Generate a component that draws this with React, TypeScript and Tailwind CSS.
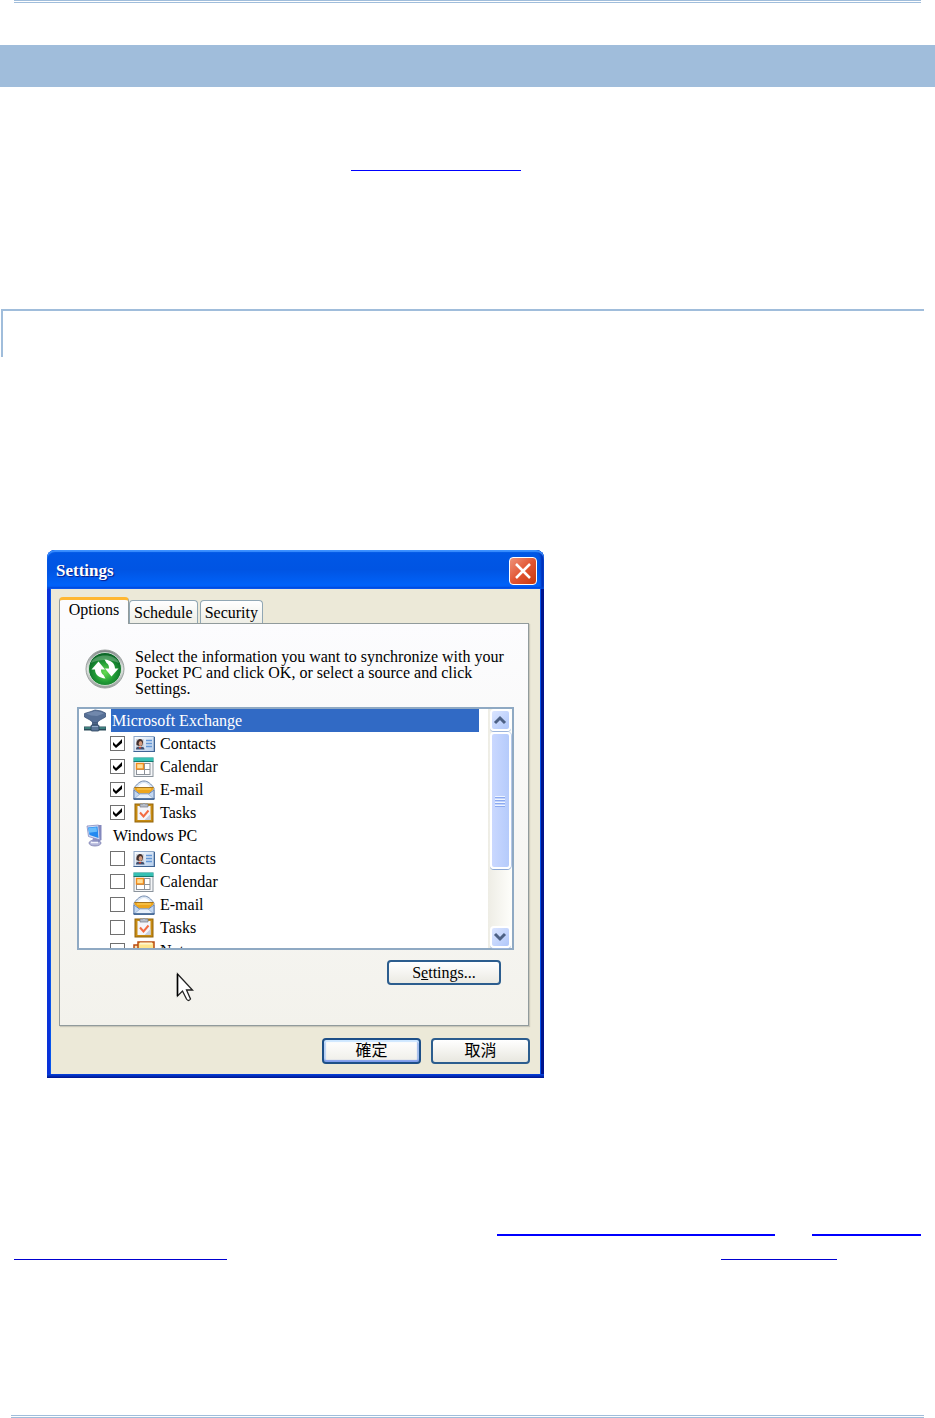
import React from "react";

function ContactsIcon() {
    return (
        <svg viewBox="0 0 22 20" className="h-5 w-[22px]" aria-hidden="true">
            <defs>
                <linearGradient id="card" x1="0" y1="0" x2="1" y2="1">
                    <stop offset="0" stopColor="#ffffff" />
                    <stop offset="1" stopColor="#b4cdec" />
                </linearGradient>
            </defs>
            <rect x="1" y="2.5" width="20" height="15" fill="url(#card)" stroke="#8fa8c8" />
            <path d="M0.5 17.5h21V3" fill="none" stroke="#3f6494" strokeWidth="1.2" />
            <rect x="3" y="5" width="8" height="10" fill="#cfd4dc" />
            <path d="M3.500 11c-1-7 7-8 6.500-2l-1 3h-3z" fill="#43302e" />
            <ellipse cx="7.500" cy="9.500" rx="1.800" ry="2.500" fill="#d39a7c" />
            <path d="M3 15.500c0-3 2-3 4-2.500 2-.5 4.500 0 4.500 2.500z" fill="#3d4f70" />
            <path d="M5.500 13l1.500 2 1.500-2z" fill="#d8442c" />
            <path d="M13 6.500h6M13 9.500h6M13 12.500h6" stroke="#6497d6" strokeWidth="1.300" />
        </svg>
    );
}

function CalendarIcon() {
    return (
        <svg viewBox="0 0 22 20" className="h-5 w-[22px]" aria-hidden="true">
            <rect x="1" y="1" width="19" height="18.500" fill="#f4f6f8" stroke="#8a939c" />
            <rect x="0.500" y="0.500" width="20" height="3.500" fill="#36c0b3" />
            <path d="M0.500 4.500h20" stroke="#16796f" />
            <rect x="3.500" y="6.500" width="13.500" height="11" fill="#fff" stroke="#8c9299" />
            <path d="M11.500 6.500v11M3.500 12.500H17" stroke="#8c9299" />
            <rect x="3.500" y="6.500" width="7" height="5.500" fill="#ffe09b" stroke="#f08a1c" strokeWidth="1.400" />
        </svg>
    );
}

function MailIcon() {
    return (
        <svg viewBox="0 0 22 20" className="h-5 w-[22px]" aria-hidden="true">
            <path d="M1 8C4 4 7 1 11 1s7 3 10 7v11H1z" fill="#dbe7f5" stroke="#7189ad" />
            <path d="M5 7C7 4 9 3 11 3s4 1 6 4z" fill="#fff" />
            <path d="M1.500 7h19v2.500L16 13.500H6L1.500 9.500z" fill="#eda51d" />
            <path d="M1.500 7.500h19" stroke="#a8751d" />
            <path d="M4 9h14" stroke="#ffd667" />
            <path d="M1 19V10l5.500 4h9l5.500-4v9z" fill="#c3d8f2" stroke="#6a87b4" />
            <path d="M1 19l6-5h8l6 5z" fill="#e6effa" stroke="#8ca7cc" strokeWidth=".7" />
            <path d="M0.500 19h21" stroke="#345a8b" strokeWidth="1.500" />
        </svg>
    );
}

function TasksIcon() {
    return (
        <svg viewBox="0 0 22 20" className="h-5 w-[22px]" aria-hidden="true">
            <rect x="2" y="1" width="18" height="18" fill="#c88c12" stroke="#94640b" />
            <path d="M4.500 3h13v14h-13z" fill="#f5f5fa" />
            <path d="M17.500 11v6h-6z" fill="#c8cfe0" />
            <path d="M7 1h2.500q1.500-2 3 0H15v3H7z" fill="#b8bec9" stroke="#727985" strokeWidth=".7" />
            <path d="M7 9.500l3.500 4 5-6" fill="none" stroke="#f36b42" strokeWidth="2" />
        </svg>
    );
}

function NotesIcon() {
    return (
        <svg viewBox="0 0 22 20" className="h-5 w-[22px]" aria-hidden="true">
            <path d="M1 4h5v15H1z" fill="#f8dfaf" stroke="#b9490e" strokeWidth="1.500" />
            <path d="M5 1h16v17H5z" fill="#ffe58d" stroke="#b9490e" strokeWidth="1.500" />
            <path d="M7 2.500h12" stroke="#fff7cf" strokeWidth="2" />
        </svg>
    );
}

function ExchangeIcon() {
    return (
        <svg viewBox="0 0 24 23" className="h-[23px] w-6 shrink-0" aria-hidden="true">
            <path d="M1 19.500h22" stroke="#2b4a58" strokeWidth="4" />
            <path d="M1.500 19h21" stroke="#46928a" strokeWidth="1.500" />
            <path d="M9 9h6v8H9z" fill="#4f6587" />
            <path d="M1.500 4.500L8 2.500l4-1.500 6 1 4.500 2v4L17 11l-3 2.500h-4L7 11 1.500 8z" fill="#566f95" stroke="#40577b" strokeWidth=".8" />
            <path d="M3 4.500l6-1.500 3-1 6 1 3 1.500-7 2.500-6-.5z" fill="#7188ac" />
            <rect x="8" y="16" width="8" height="6" rx="1" fill="#5b7597" stroke="#27405c" strokeWidth=".8" />
            <path d="M9 17.500h6" stroke="#93aaca" />
        </svg>
    );
}

function ComputerIcon() {
    return (
        <svg viewBox="0 0 24 23" className="h-[23px] w-6 shrink-0" aria-hidden="true">
            <ellipse cx="12" cy="19" rx="6" ry="3" fill="#b4b7da" stroke="#7a7db0" strokeWidth=".8" />
            <path d="M10 14h6l1 4H9z" fill="#8d91c1" />
            <path d="M15 1h3.500v15L15 18z" fill="#8388bd" />
            <path d="M4 2L15.500 1l1.500 15L5.500 12.500z" fill="#d6def4" stroke="#858bc0" strokeWidth=".8" />
            <path d="M5 3.500L14.500 2.500l1 11.500L6.500 11z" fill="#2389f0" />
            <path d="M5.500 4l8-.8.5 4.500-8 1z" fill="#68bdfc" />
            <path d="M8 18.500h7" stroke="#f3f4fc" strokeWidth="1.500" />
        </svg>
    );
}

function SyncIcon() {
    return (
        <svg viewBox="0 0 40 40" className="h-10 w-10 shrink-0" aria-hidden="true">
            <defs>
                <linearGradient id="ring" x1="0" y1="0" x2="0" y2="1">
                    <stop offset="0" stopColor="#7d8384" />
                    <stop offset=".5" stopColor="#e2e5e4" />
                    <stop offset="1" stopColor="#979d9b" />
                </linearGradient>
                <radialGradient id="orb" cx=".5" cy=".6" r=".6">
                    <stop offset="0" stopColor="#66dc52" />
                    <stop offset=".5" stopColor="#209b35" />
                    <stop offset="1" stopColor="#075e25" />
                </radialGradient>
            </defs>
            <circle cx="20" cy="20" r="19" fill="url(#ring)" stroke="#9aa09e" />
            <circle cx="20" cy="20" r="16.500" fill="url(#orb)" stroke="#e7efe7" strokeWidth=".8" />
            <path d="M6 14C9 4 31 4 34 14 25 10 14 10 6 14z" fill="#fff" opacity=".25" />
            <path d="M13.500 12.500L6.500 20.500h3.500c0 5 4 8.500 10.500 9l-2-3.500c-2-1-2.500-3-2.500-5.500h4z" fill="#fff" />
            <path d="M26.500 27.500l7-8H30c0-5-4-8.500-10.500-9l2 3.500c2 1 2.500 3 2.500 5.500h-4z" fill="#fff" />
        </svg>
    );
}

const items = [
    { name: "Contacts", Icon: ContactsIcon },
    { name: "Calendar", Icon: CalendarIcon },
    { name: "E-mail", Icon: MailIcon },
    { name: "Tasks", Icon: TasksIcon },
];

function SourceItem({ name, Icon, checked }: { name: string; Icon: () => React.ReactNode; checked?: boolean }) {
    return (
        <label className="flex h-[23px] items-center pl-[31px]">
            <span className="grid h-[15px] w-[15px]">
                <input
                    type="checkbox"
                    defaultChecked={checked}
                    className="peer col-start-1 row-start-1 h-[15px] w-[15px] appearance-none border border-[#707070] bg-white"
                />
                <svg
                    viewBox="0 0 15 15"
                    className="pointer-events-none invisible col-start-1 row-start-1 h-[15px] w-[15px] peer-checked:visible"
                    aria-hidden="true"
                >
                    <path d="M3 6l3 3 6-6v4l-6 5-3-3z" fill="#000" />
                </svg>
            </span>
            <span className="ml-2 flex shrink-0">
                <Icon />
            </span>
            <span className="ml-[5px]">{name}</span>
        </label>
    );
}

function ScrollButton({ label, d }: { label: string; d: string }) {
    return (
        <button
            type="button"
            aria-label={label}
            className="flex h-[22px] w-[21px] shrink-0 items-center justify-center rounded-sm border-2 border-white bg-linear-to-br from-[#dbe5ff] to-[#b0c7fa] shadow-[0_1px_0_#9cb5dc]"
        >
            <svg viewBox="0 0 14 12" className="h-3 w-3.5">
                <path d={d} fill="none" stroke="#4d6185" strokeWidth="3" />
            </svg>
        </button>
    );
}

function SettingsDialog() {
    const [tab, setTab] = React.useState("Options");

    return (
        <section
            aria-label="Settings"
            className="w-full max-w-[497px] rounded-t-lg bg-linear-to-r from-[#0831d9] via-[#0855ec] to-[#00138c] font-['Liberation_Serif','Noto_Sans_CJK_TC',serif] text-base leading-4 text-black"
        >
            <header className="flex h-[39px] items-center justify-between rounded-t-lg bg-linear-to-b from-[#0058e6] via-[#0054e3] to-[#0066ff] pt-0.5 pr-[7px] pl-[9px] shadow-[inset_0_2px_1px_#3b91ff,inset_0_-2px_2px_#0046d5,inset_-3px_0_2px_#0030b8]">
                <h2 className="text-[17px] font-bold text-white [text-shadow:1px_1px_1px_#0a1883]">Settings</h2>
                <button
                    type="button"
                    aria-label="Close"
                    className="flex h-7 w-7 items-center justify-center rounded-sm border border-white bg-linear-to-br from-[#ed9279] via-[#e25532] to-[#c83808]"
                >
                    <svg viewBox="0 0 18 18" className="h-[18px] w-[18px]">
                        <path d="M2 2l14 14M16 2L2 16" stroke="#fff" strokeWidth="2.500" />
                    </svg>
                </button>
            </header>

            <div className="mx-1 bg-[#ece9d8] px-2 pt-2 pb-2.5 shadow-[0_0_0_1px_#0855ec]">
                <div role="tablist" className="flex h-[26px] items-end">
                    {["Options", "Schedule", "Security"].map((name) => (
                        <button
                            key={name}
                            type="button"
                            role="tab"
                            aria-selected={tab === name}
                            onClick={() => setTab(name)}
                            className={
                                tab === name
                                    ? "z-10 -mb-px h-[27px] w-[70px] rounded-t-sm border-x border-t-3 border-x-[#919b9c] border-t-[#ffb732] bg-[#fcfcfe] pb-1"
                                    : "mr-0.5 h-[23px] rounded-t-sm border border-b-0 border-[#91a7b4] bg-linear-to-b from-white to-[#eeeee6] px-1 pt-0.5"
                            }
                        >
                            {name}
                        </button>
                    ))}
                </div>

                <div
                    role="tabpanel"
                    className="mr-[3px] h-[403px] border border-[#919b9c] bg-linear-to-b from-[#fcfcfe] to-[#f3f2ec] pt-[25px] pr-3.5 pl-[17px] shadow-[1px_1px_1px_#c9c7ba]"
                >
                    <div className="flex h-[58px] gap-2.5 pl-2">
                        <SyncIcon />
                        <p>
                            Select the information you want to synchronize with your
                            <br />
                            Pocket PC and click OK, or select a source and click
                            <br />
                            Settings.
                        </p>
                    </div>

                    <div className="flex h-[243px] border-2 border-[#8fa9c3] bg-white">
                        <div className="min-w-0 flex-1 overflow-hidden pr-[9px]">
                            <div className="flex h-[23px] items-center gap-1 pl-1">
                                <ExchangeIcon />
                                <span className="flex h-[23px] flex-1 items-center bg-[#316ac5] pl-px text-white">
                                    Microsoft Exchange
                                </span>
                            </div>
                            {items.map((item) => (
                                <SourceItem key={item.name} {...item} checked />
                            ))}
                            <div className="flex h-[23px] items-center gap-1.5 pl-1">
                                <ComputerIcon />
                                <span>Windows PC</span>
                            </div>
                            {items.map((item) => (
                                <SourceItem key={item.name} {...item} />
                            ))}
                            <SourceItem name="Notes" Icon={NotesIcon} />
                        </div>
                        <div className="flex w-6 flex-col items-center bg-linear-to-r from-[#eeede5] to-[#fefefb]">
                            <ScrollButton label="Scroll up" d="M2 9l5-5 5 5" />
                            <div className="mt-px flex h-[137px] w-[21px] flex-col items-center justify-center gap-0.5 rounded-sm border-2 border-white bg-linear-to-r from-[#cad8ff] to-[#b5cbfb] shadow-[0_1px_0_#8ba8d6,1px_0_0_#b5c8e8]">
                                <span className="h-px w-2.5 bg-[#eef4fe] shadow-[0_1px_0_#8caaf0]" />
                                <span className="h-px w-2.5 bg-[#eef4fe] shadow-[0_1px_0_#8caaf0]" />
                                <span className="h-px w-2.5 bg-[#eef4fe] shadow-[0_1px_0_#8caaf0]" />
                                <span className="h-px w-2.5 bg-[#eef4fe] shadow-[0_1px_0_#8caaf0]" />
                            </div>
                            <div className="flex-1" />
                            <ScrollButton label="Scroll down" d="M2 3l5 5 5-5" />
                        </div>
                    </div>

                    <div className="mt-2.5 flex items-start justify-between pr-[13px] pl-[99px]">
                        <svg viewBox="0 0 18 30" className="mt-3 h-[30px] w-[18px]" aria-hidden="true">
                            <path d="M1.500 2v22l5-5 4 8q2 3 4 0l-4-9h6z" fill="#fff" stroke="#222" strokeWidth="1.300" />
                            <path d="M1.500 2v22" stroke="#000" strokeWidth="1.500" />
                        </svg>
                        <button
                            type="button"
                            className="h-[25px] w-[114px] rounded-[4px] border-2 border-[#2c5d8e] bg-linear-to-b from-white to-[#ebeae3]"
                        >
                            S<span className="underline">e</span>ttings...
                        </button>
                    </div>
                </div>

                <div className="mt-3 flex justify-end gap-2.5 pr-0.5">
                    <button
                        type="button"
                        className="h-[26px] w-[99px] rounded-[4px] border-2 border-[#1d4f87] bg-linear-to-b from-white to-[#efeee8] shadow-[inset_0_2px_1px_#cee7ff,inset_0_-2px_1px_#7f9cec,inset_2px_0_1px_#bcd4f6,inset_-2px_0_1px_#a2bcec]"
                    >
                        確定
                    </button>
                    <button
                        type="button"
                        className="h-[26px] w-[99px] rounded-[4px] border-2 border-[#2c5d8e] bg-linear-to-b from-white to-[#e8e7df]"
                    >
                        取消
                    </button>
                </div>
            </div>
            <div className="h-1 bg-linear-to-b from-[#0842e0] to-[#00138c]" />
        </section>
    );
}

export default function App() {
    return (
        <main className="bg-white">
            <div className="mr-3.5 ml-3.5 h-[3px] border-y border-[#a0bddb]" />
            <div className="mt-[42px] h-[42px] bg-[#a0bddb]" />
            <nav aria-label="Related section" className="flex pt-[83px] pl-[351px]">
                <a href="#section" aria-label="Related section" className="w-[170px] border-b border-[#0000ff]" />
            </nav>
            <div className="mt-[138px] mr-[11px] ml-px h-12 border-t-2 border-l-2 border-[#a0bddb]" />

            <div className="mt-[193px] px-[47px]">
                <SettingsDialog />
            </div>

            <nav aria-label="References" className="mr-3.5 ml-3.5 pt-[156px]">
                <div className="flex justify-end gap-[37px]">
                    <a href="#settings" aria-label="Settings reference" className="w-[278px] border-b-2 border-[#0000ff]" />
                    <a href="#schedule" aria-label="Schedule reference" className="w-[109px] border-b-2 border-[#0000ff]" />
                </div>
                <div className="mt-[23px] flex justify-between pr-[84px]">
                    <a href="#schedule" aria-label="Schedule reference, continued" className="w-[213px] border-b border-[#0000d0]" />
                    <a href="#security" aria-label="Security reference" className="w-[116px] border-b border-[#0000d0]" />
                </div>
            </nav>
            <footer className="mt-[155px] mr-[11px] ml-[11px] h-[3px] border-y border-[#a0bddb]" />
        </main>
    );
}
